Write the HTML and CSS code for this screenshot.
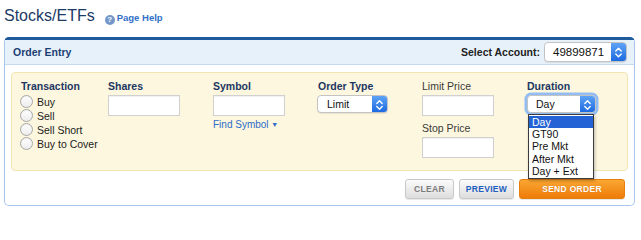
FILE: index.html
```html
<!DOCTYPE html>
<html>
<head>
<meta charset="utf-8">
<title>Stocks/ETFs</title>
<link rel="stylesheet" href="styles.css">
</head>
<body>
<div class="page-head">
  <h1 class="title">Stocks/ETFs</h1>
  <a class="help" href="#"><span class="help-icon">?</span>Page Help</a>
</div>
<div class="panel">
  <div class="panel-head">
    <span class="panel-title">Order Entry</span>
    <div class="account">
      <span class="account-label">Select Account:</span>
      <div class="mac-select account-select">
        <span class="sel-value">49899871</span>
        <span class="stepper"><svg width="15" height="19" viewBox="0 0 15 19"><path d="M4.8 8 L7.5 5.3 L10.2 8 M4.8 11 L7.5 13.7 L10.2 11" fill="none" stroke="#fff" stroke-width="1.4" stroke-linecap="round" stroke-linejoin="round"/></svg></span>
      </div>
    </div>
  </div>
  <div class="panel-body">
    <div class="entry">
      <div class="col col-trans">
        <div class="label">Transaction</div>
        <div class="radios">
          <label class="radio-row"><input type="radio" name="tx" class="radio">Buy</label>
          <label class="radio-row"><input type="radio" name="tx" class="radio">Sell</label>
          <label class="radio-row"><input type="radio" name="tx" class="radio">Sell Short</label>
          <label class="radio-row"><input type="radio" name="tx" class="radio">Buy to Cover</label>
        </div>
      </div>
      <div class="col">
        <div class="label">Shares</div>
        <input type="text" class="text-input">
      </div>
      <div class="col">
        <div class="label">Symbol</div>
        <input type="text" class="text-input">
        <a class="find" href="#">Find Symbol <span class="tri">&#9660;</span></a>
      </div>
      <div class="col col-order">
        <div class="label">Order Type</div>
        <div class="mac-select field-select">
          <span class="sel-value">Limit</span>
          <span class="stepper"><svg width="15" height="18" viewBox="0 0 15 18"><path d="M4.8 7.5 L7.5 4.8 L10.2 7.5 M4.8 10.5 L7.5 13.2 L10.2 10.5" fill="none" stroke="#fff" stroke-width="1.4" stroke-linecap="round" stroke-linejoin="round"/></svg></span>
        </div>
      </div>
      <div class="col">
        <div class="label plain">Limit Price</div>
        <input type="text" class="text-input">
        <div class="label plain stop-label">Stop Price</div>
        <input type="text" class="text-input">
      </div>
      <div class="col col-dur">
        <div class="label">Duration</div>
        <div class="dur-wrap">
          <div class="mac-select field-select dur-select">
            <span class="sel-value">Day</span>
            <span class="stepper"><svg width="15" height="18" viewBox="0 0 15 18"><path d="M4.8 7.5 L7.5 4.8 L10.2 7.5 M4.8 10.5 L7.5 13.2 L10.2 10.5" fill="none" stroke="#fff" stroke-width="1.4" stroke-linecap="round" stroke-linejoin="round"/></svg></span>
          </div>
          <ul class="menu">
            <li class="menu-item active">Day</li>
            <li class="menu-item">GT90</li>
            <li class="menu-item">Pre Mkt</li>
            <li class="menu-item">After Mkt</li>
            <li class="menu-item">Day + Ext</li>
          </ul>
        </div>
      </div>
    </div>
    <div class="actions">
      <button class="btn btn-clear">CLEAR</button>
      <button class="btn btn-preview">PREVIEW</button>
      <button class="btn btn-send">SEND ORDER</button>
    </div>
  </div>
</div>
</body>
</html>
```
FILE: styles.css
```css
body {
  margin: 0;
  width: 641px;
  background: #fff;
  font-family: "Liberation Sans", Arial, sans-serif;
  color: #222;
}

.page-head {
  height: 37px;
  box-sizing: border-box;
  padding: 6px 0 0 4px;
  display: flex;
  align-items: baseline;
}

.title {
  margin: 0;
  font-size: 16px;
  font-weight: normal;
  line-height: 20px;
  color: #1c3a66;
}

.help {
  margin-left: 10px;
  font-size: 9.5px;
  font-weight: bold;
  color: #2f6fc8;
  text-decoration: none;
}

.help-icon {
  display: inline-block;
  width: 10px;
  height: 10px;
  margin-right: 2px;
  border-radius: 50%;
  background: #7497c9;
  color: #fff;
  font-size: 8px;
  line-height: 10px;
  text-align: center;
  vertical-align: -1px;
}

.panel {
  margin: 0 6px 0 4px;
  border: 1px solid #a9c6ea;
  border-top: 3px solid #1e5a9c;
  border-radius: 5px;
}

.panel-head {
  height: 25px;
  box-sizing: border-box;
  padding: 0 7px 0 8px;
  display: flex;
  align-items: center;
  justify-content: space-between;
  background: #e7f1fa;
  border-bottom: 1px solid #c5daf0;
}

.panel-title {
  font-size: 10.5px;
  font-weight: bold;
  color: #1c3f73;
}

.account {
  display: flex;
  align-items: center;
  gap: 4px;
}

.account-label {
  font-size: 10.5px;
  font-weight: bold;
  color: #222;
}

.mac-select {
  display: flex;
  align-items: center;
  justify-content: space-between;
  box-sizing: border-box;
  background: #fff;
  border: 1px solid #c3c3c3;
  border-radius: 4px;
  box-shadow: 0 1px 1px rgba(0, 0, 0, 0.08);
  overflow: hidden;
}

.account-select {
  width: 83px;
  height: 20px;
  padding-left: 8px;
}

.account-select .sel-value {
  font-size: 11.5px;
  color: #111;
}

.stepper {
  display: flex;
  align-self: stretch;
  width: 15px;
  background: linear-gradient(#5ea3f7, #1c6ae0);
}

.stepper svg {
  display: block;
}

.panel-body {
  padding: 7px 6px 6px 6px;
}

.entry {
  display: flex;
  padding: 7px 0 12px 9px;
  background: #fcf7de;
  border: 1px solid #f1e5b2;
  border-radius: 4px;
}

.col {
  width: 105px;
  display: flex;
  flex-direction: column;
  align-items: flex-start;
}

.col-trans {
  width: 87px;
}

.col-order {
  width: 104px;
}

.col-dur {
  width: auto;
}

.label {
  font-size: 10.5px;
  line-height: 13px;
  font-weight: bold;
  color: #1c3663;
  margin-bottom: 2px;
}

.label.plain {
  font-weight: normal;
  color: #3a3a3a;
}

.stop-label {
  margin-top: 6px;
}

.radios {
  margin-top: -0.5px;
}

.radio-row {
  display: flex;
  align-items: center;
  height: 14px;
  font-size: 10.5px;
  color: #222;
}

.radio {
  appearance: none;
  -webkit-appearance: none;
  width: 13px;
  height: 13px;
  margin: 0 4px 0 -1px;
  border: 1px solid #a8a8a8;
  border-radius: 50%;
  background: linear-gradient(#ffffff, #ececec);
  box-shadow: inset 0 1px 1px rgba(0, 0, 0, 0.06);
}

.text-input {
  display: block;
  width: 72px;
  height: 21px;
  box-sizing: border-box;
  margin: 0;
  padding: 0;
  border: 1px solid #d0d0d0;
  background: #fff;
  box-shadow: inset 0 1px 1px rgba(0, 0, 0, 0.06);
}

.find {
  margin-top: 3px;
  font-size: 10px;
  line-height: 12px;
  color: #2c6bc9;
  text-decoration: none;
}

.tri {
  font-size: 7px;
  vertical-align: 1px;
}

.field-select {
  width: 71px;
  height: 18px;
  padding-left: 9px;
  margin-left: -1px;
}

.field-select .sel-value {
  font-size: 10.5px;
  color: #111;
}

.dur-wrap {
  position: relative;
}

.dur-select {
  width: 69px;
  margin-left: 0;
  padding-left: 8px;
  box-shadow: 0 0 0 2.5px #93bcf2;
}

.menu {
  position: absolute;
  top: 19px;
  left: 1px;
  z-index: 5;
  width: 66px;
  box-sizing: border-box;
  margin: 0;
  padding: 1px 0;
  list-style: none;
  background: #fff;
  border: 1px solid #3c3c3c;
  box-shadow: 1px 2px 3px rgba(0, 0, 0, 0.25);
}

.menu-item {
  height: 12.2px;
  line-height: 12.2px;
  padding-left: 3px;
  font-size: 10.5px;
  color: #111;
}

.menu-item.active {
  background: #2463d5;
  color: #fff;
}

.actions {
  display: flex;
  justify-content: flex-end;
  gap: 5px;
  margin: 8px 3px 0 0;
}

.btn {
  height: 20px;
  box-sizing: border-box;
  padding: 0;
  border: 1px solid #c9c9c9;
  border-radius: 3px;
  background: linear-gradient(#fbfbfb, #dddddd);
  font-family: "Liberation Sans", Arial, sans-serif;
  font-size: 8.5px;
  font-weight: bold;
  letter-spacing: 0.3px;
  color: #7c7c7c;
  box-shadow: 0 1px 1px rgba(0, 0, 0, 0.1);
}

.btn-clear {
  width: 49px;
}

.btn-preview {
  width: 55px;
  color: #1f5fbf;
}

.btn-send {
  width: 106px;
  border-color: #e5800f;
  background: linear-gradient(#fba733, #ee7b08);
  color: #fff;
  text-shadow: 0 0 1px rgba(160, 70, 0, 0.4);
}
```
